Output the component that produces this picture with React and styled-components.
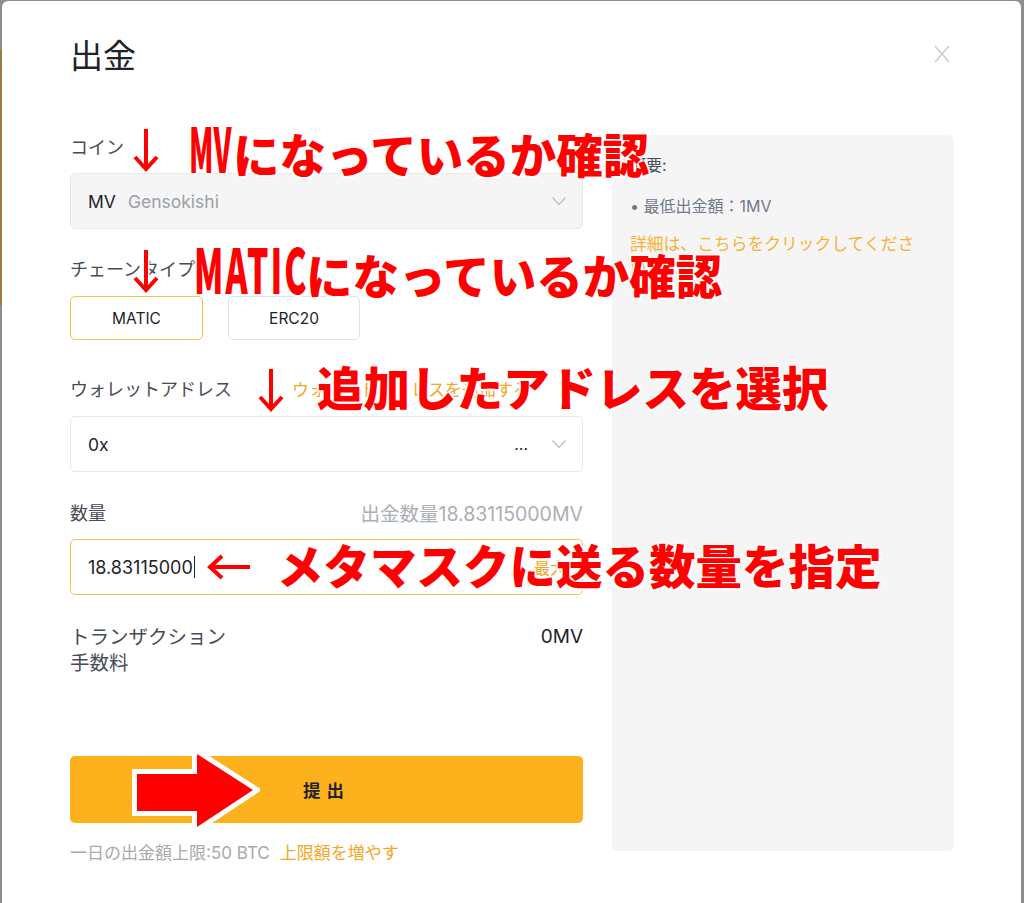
import React from 'react'
import styled, { createGlobalStyle } from 'styled-components'

const GlobalStyle = createGlobalStyle`
  html, body {
    margin: 0;
    padding: 0;
  }
  body {
    background:
      linear-gradient(to bottom, #8d8d8d 0, #8d8d8d 50px, #9a7b44 50px, #9a7b44 305px, #8d8d8d 305px) left top / 2px 100% no-repeat,
      #8d8d8d;
    font-family: Inter, "Noto Sans CJK JP", sans-serif;
  }
`

const App = () => {
  return (
    <Page>
      <GlobalStyle />
      <Modal>
        <Header>
          <Title>出金</Title>
          <CloseIcon viewBox="0 0 16 18">
            <path d="M1 1 L15 17 M15 1 L1 17" />
          </CloseIcon>
        </Header>
        <Body>
          <Form>
            <Label>コイン</Label>
            <Select $bg="#f5f5f5" $mt={13}>
              <Symbol>MV</Symbol>
              <CoinName>Gensokishi</CoinName>
              <Spacer />
              <Chevron />
            </Select>

            <Label $mt={29}>チェーンタイプ</Label>
            <ChainRow>
              <ChainButton $active>MATIC</ChainButton>
              <ChainButton>ERC20</ChainButton>
            </ChainRow>

            <Label $mt={38}>
              ウォレットアドレス
              <AddLink>ウォレットアドレスを追加する</AddLink>
            </Label>
            <Select $mt={14}>
              <Value>0x</Value>
              <Spacer />
              <Dots>...</Dots>
              <Chevron />
            </Select>

            <Label $mt={30} $between>
              数量
              <Available>出金数量18.83115000MV</Available>
            </Label>
            <Select $mt={13} $focus>
              <Amount>18.83115000</Amount>
              <Caret />
              <Spacer />
              <MaxLink>最大</MaxLink>
            </Select>

            <FeeRow>
              <FeeLabel>
                トランザクション
                <br />
                手数料
              </FeeLabel>
              <FeeValue>0MV</FeeValue>
            </FeeRow>

            <Submit>提出</Submit>
            <Limit>
              一日の出金額上限:50 BTC
              <LimitLink>上限額を増やす</LimitLink>
            </Limit>
          </Form>

          <Panel>
            <PanelTitle>概要:</PanelTitle>
            <PanelItem>• 最低出金額：1MV</PanelItem>
            <PanelLink>詳細は、こちらをクリックしてください。</PanelLink>
          </Panel>
        </Body>
      </Modal>

      <DownArrow $x={133} $y={127} />
      <Note $x={189} $y={123}>
        <Cond $w={44} $s={0.45}>MV</Cond>になっているか確認
      </Note>

      <DownArrow $x={133} $y={248} />
      <Note $x={194} $y={244}>
        <Cond $w={112} $s={0.54} $ls={4}>MATIC</Cond>になっているか確認
      </Note>

      <DownArrow $x={258} $y={367} />
      <Note $x={317} $y={363}>追加したアドレスを選択</Note>

      <LeftArrow $x={206} $y={554} />
      <Note $x={277} $y={541}>メタマスクに送る数量を指定</Note>

      <BlockArrow viewBox="0 0 130 84">
        <polygon points="7,24 67,24 67,4 123,40 67,77 67,61 7,61" />
      </BlockArrow>
    </Page>
  )
}

const Chevron = () => (
  <ChevronIcon viewBox="0 0 14 8">
    <path d="M0.5 0.5 L7 7.5 L13.5 0.5" />
  </ChevronIcon>
)

const DownArrow = ({ $x, $y }) => (
  <ArrowSvg $x={$x} $y={$y} width="26" height="46" viewBox="0 0 26 46">
    <path className="halo" d="M13 2 V42 M2 30 L13 42 L24 30" />
    <path d="M13 2 V42 M2 30 L13 42 L24 30" />
  </ArrowSvg>
)

const LeftArrow = ({ $x, $y }) => (
  <ArrowSvg $x={$x} $y={$y} width="46" height="26" viewBox="0 0 46 26">
    <path className="halo" d="M44 13 H4 M16 2 L4 13 L16 24" />
    <path d="M44 13 H4 M16 2 L4 13 L16 24" />
  </ArrowSvg>
)

export default App

const Page = styled.div`
  position: relative;
  width: 1024px;
  height: 903px;
  overflow: hidden;
`
const Modal = styled.div`
  box-sizing: border-box;
  height: 902px;
  margin: 1px 3px 0 2px;
  padding: 0 67px 0 68px;
  background: #ffffff;
  border-radius: 6px 6px 0 0;
`
const Header = styled.div`
  display: flex;
  align-items: center;
  justify-content: space-between;
  height: 40px;
  padding-top: 33px;
`
const Title = styled.div`
  font-size: 33px;
  line-height: 40px;
  color: #1e2329;
  font-family: "Noto Sans CJK JP", sans-serif;
`
const CloseIcon = styled.svg`
  width: 16px;
  height: 18px;
  margin-right: 4px;
  fill: none;
  stroke: #c8cbd0;
  stroke-width: 1.4;
`
const Body = styled.div`
  display: flex;
  gap: 29px;
  margin-top: 61px;
`
const Form = styled.div`
  width: 513px;
  padding-top: 1px;
`
const Label = styled.div`
  display: flex;
  align-items: center;
  justify-content: ${p => (p.$between ? 'space-between' : 'flex-start')};
  margin-top: ${p => p.$mt || 0}px;
  font-size: 18px;
  line-height: 24px;
  color: #474d57;
`
const AddLink = styled.span`
  margin-left: 60px;
  color: #f5a623;
  font-size: 17px;
`
const Available = styled.span`
  color: #a9afb7;
  font-size: 19.5px;
`
const Select = styled.div`
  box-sizing: border-box;
  display: flex;
  align-items: center;
  height: 56px;
  margin-top: ${p => p.$mt || 0}px;
  padding: 0 16px 0 17px;
  background: ${p => p.$bg || '#ffffff'};
  border: 1px solid ${p => (p.$focus ? '#f7c04a' : '#e6e8ea')};
  border-radius: 5px;
`
const Symbol = styled.span`
  font-size: 17.5px;
  color: #1e2329;
  margin-right: 12px;
`
const CoinName = styled.span`
  font-size: 17.5px;
  color: #9aa0a8;
`
const Value = styled.span`
  font-size: 17.5px;
  color: #1e2329;
`
const Spacer = styled.div`
  flex: 1;
`
const Dots = styled.span`
  font-size: 16px;
  color: #1e2329;
  margin-right: 24px;
`
const ChevronIcon = styled.svg`
  width: 14px;
  height: 8px;
  fill: none;
  stroke: #b7bdc6;
  stroke-width: 1.2;
`
const Amount = styled.span`
  font-size: 18px;
  color: #1e2329;
`
const Caret = styled.span`
  width: 1px;
  height: 22px;
  margin-left: 1px;
  background: #1e2329;
`
const MaxLink = styled.span`
  font-size: 16px;
  color: #f5a623;
`
const ChainRow = styled.div`
  display: flex;
  gap: 25px;
  margin-top: 14px;
`
const ChainButton = styled.div`
  box-sizing: border-box;
  display: flex;
  align-items: center;
  justify-content: center;
  width: ${p => (p.$active ? 133 : 132)}px;
  height: 44px;
  font-size: 15.5px;
  color: #1e2329;
  border: 1px solid ${p => (p.$active ? '#f7c04a' : '#e0e3e6')};
  border-radius: 5px;
`
const FeeRow = styled.div`
  display: flex;
  justify-content: space-between;
  margin-top: 29px;
  font-size: 19.5px;
  line-height: 26px;
  color: #474d57;
`
const FeeLabel = styled.div``
const FeeValue = styled.div`
  font-size: 19px;
  color: #1e2329;
`
const Submit = styled.div`
  display: flex;
  align-items: center;
  justify-content: center;
  height: 67px;
  margin-top: 80px;
  background: #fdb21d;
  border-radius: 5px;
  font-family: "Noto Sans CJK JP", sans-serif;
  font-size: 17.5px;
  font-weight: 700;
  letter-spacing: 6px;
  color: #1e2329;
`
const Limit = styled.div`
  margin-top: 18px;
  font-size: 17px;
  line-height: 24px;
  color: #a9a9a9;
`
const LimitLink = styled.span`
  margin-left: 10px;
  color: #f5a623;
`
const Panel = styled.div`
  box-sizing: border-box;
  width: 342px;
  height: 716px;
  padding: 18px 18px;
  background: #f5f5f5;
  border-radius: 6px;
`
const PanelTitle = styled.div`
  font-size: 16px;
  line-height: 24px;
  color: #474d57;
`
const PanelItem = styled.div`
  margin-top: 17px;
  font-size: 16px;
  line-height: 24px;
  color: #707a8a;
`
const PanelLink = styled.div`
  width: 300px;
  margin-top: 14px;
  font-size: 16.8px;
  line-height: 24px;
  color: #f5b335;
`
const Note = styled.div`
  position: absolute;
  left: ${p => p.$x}px;
  top: ${p => p.$y}px;
  font-family: "Noto Sans CJK JP", sans-serif;
  font-weight: 900;
  font-size: 46.5px;
  line-height: 1;
  color: #ff0000;
  white-space: nowrap;
  text-shadow: 1.5px 1.5px 0 #fff, -1.5px -1.5px 0 #fff, 1.5px -1.5px 0 #fff, -1.5px 1.5px 0 #fff, 0 0 2px #fff;
`
const Cond = styled.span`
  display: inline-block;
  width: ${p => p.$w}px;
  font-size: 62px;
  line-height: 46px;
  letter-spacing: ${p => p.$ls || 0}px;
  transform: scaleX(${p => p.$s});
  transform-origin: 0 50%;
`
const ArrowSvg = styled.svg`
  position: absolute;
  left: ${p => p.$x}px;
  top: ${p => p.$y}px;
  fill: none;
  stroke: #ff0000;
  stroke-width: 4;
  stroke-linecap: butt;
  .halo {
    stroke: #ffffff;
    stroke-width: 7;
  }
`
const BlockArrow = styled.svg`
  position: absolute;
  left: 130px;
  top: 750px;
  width: 130px;
  height: 84px;
  fill: #ff0000;
  stroke: #ffffff;
  stroke-width: 10;
  paint-order: stroke fill;
  stroke-linejoin: miter;
`
